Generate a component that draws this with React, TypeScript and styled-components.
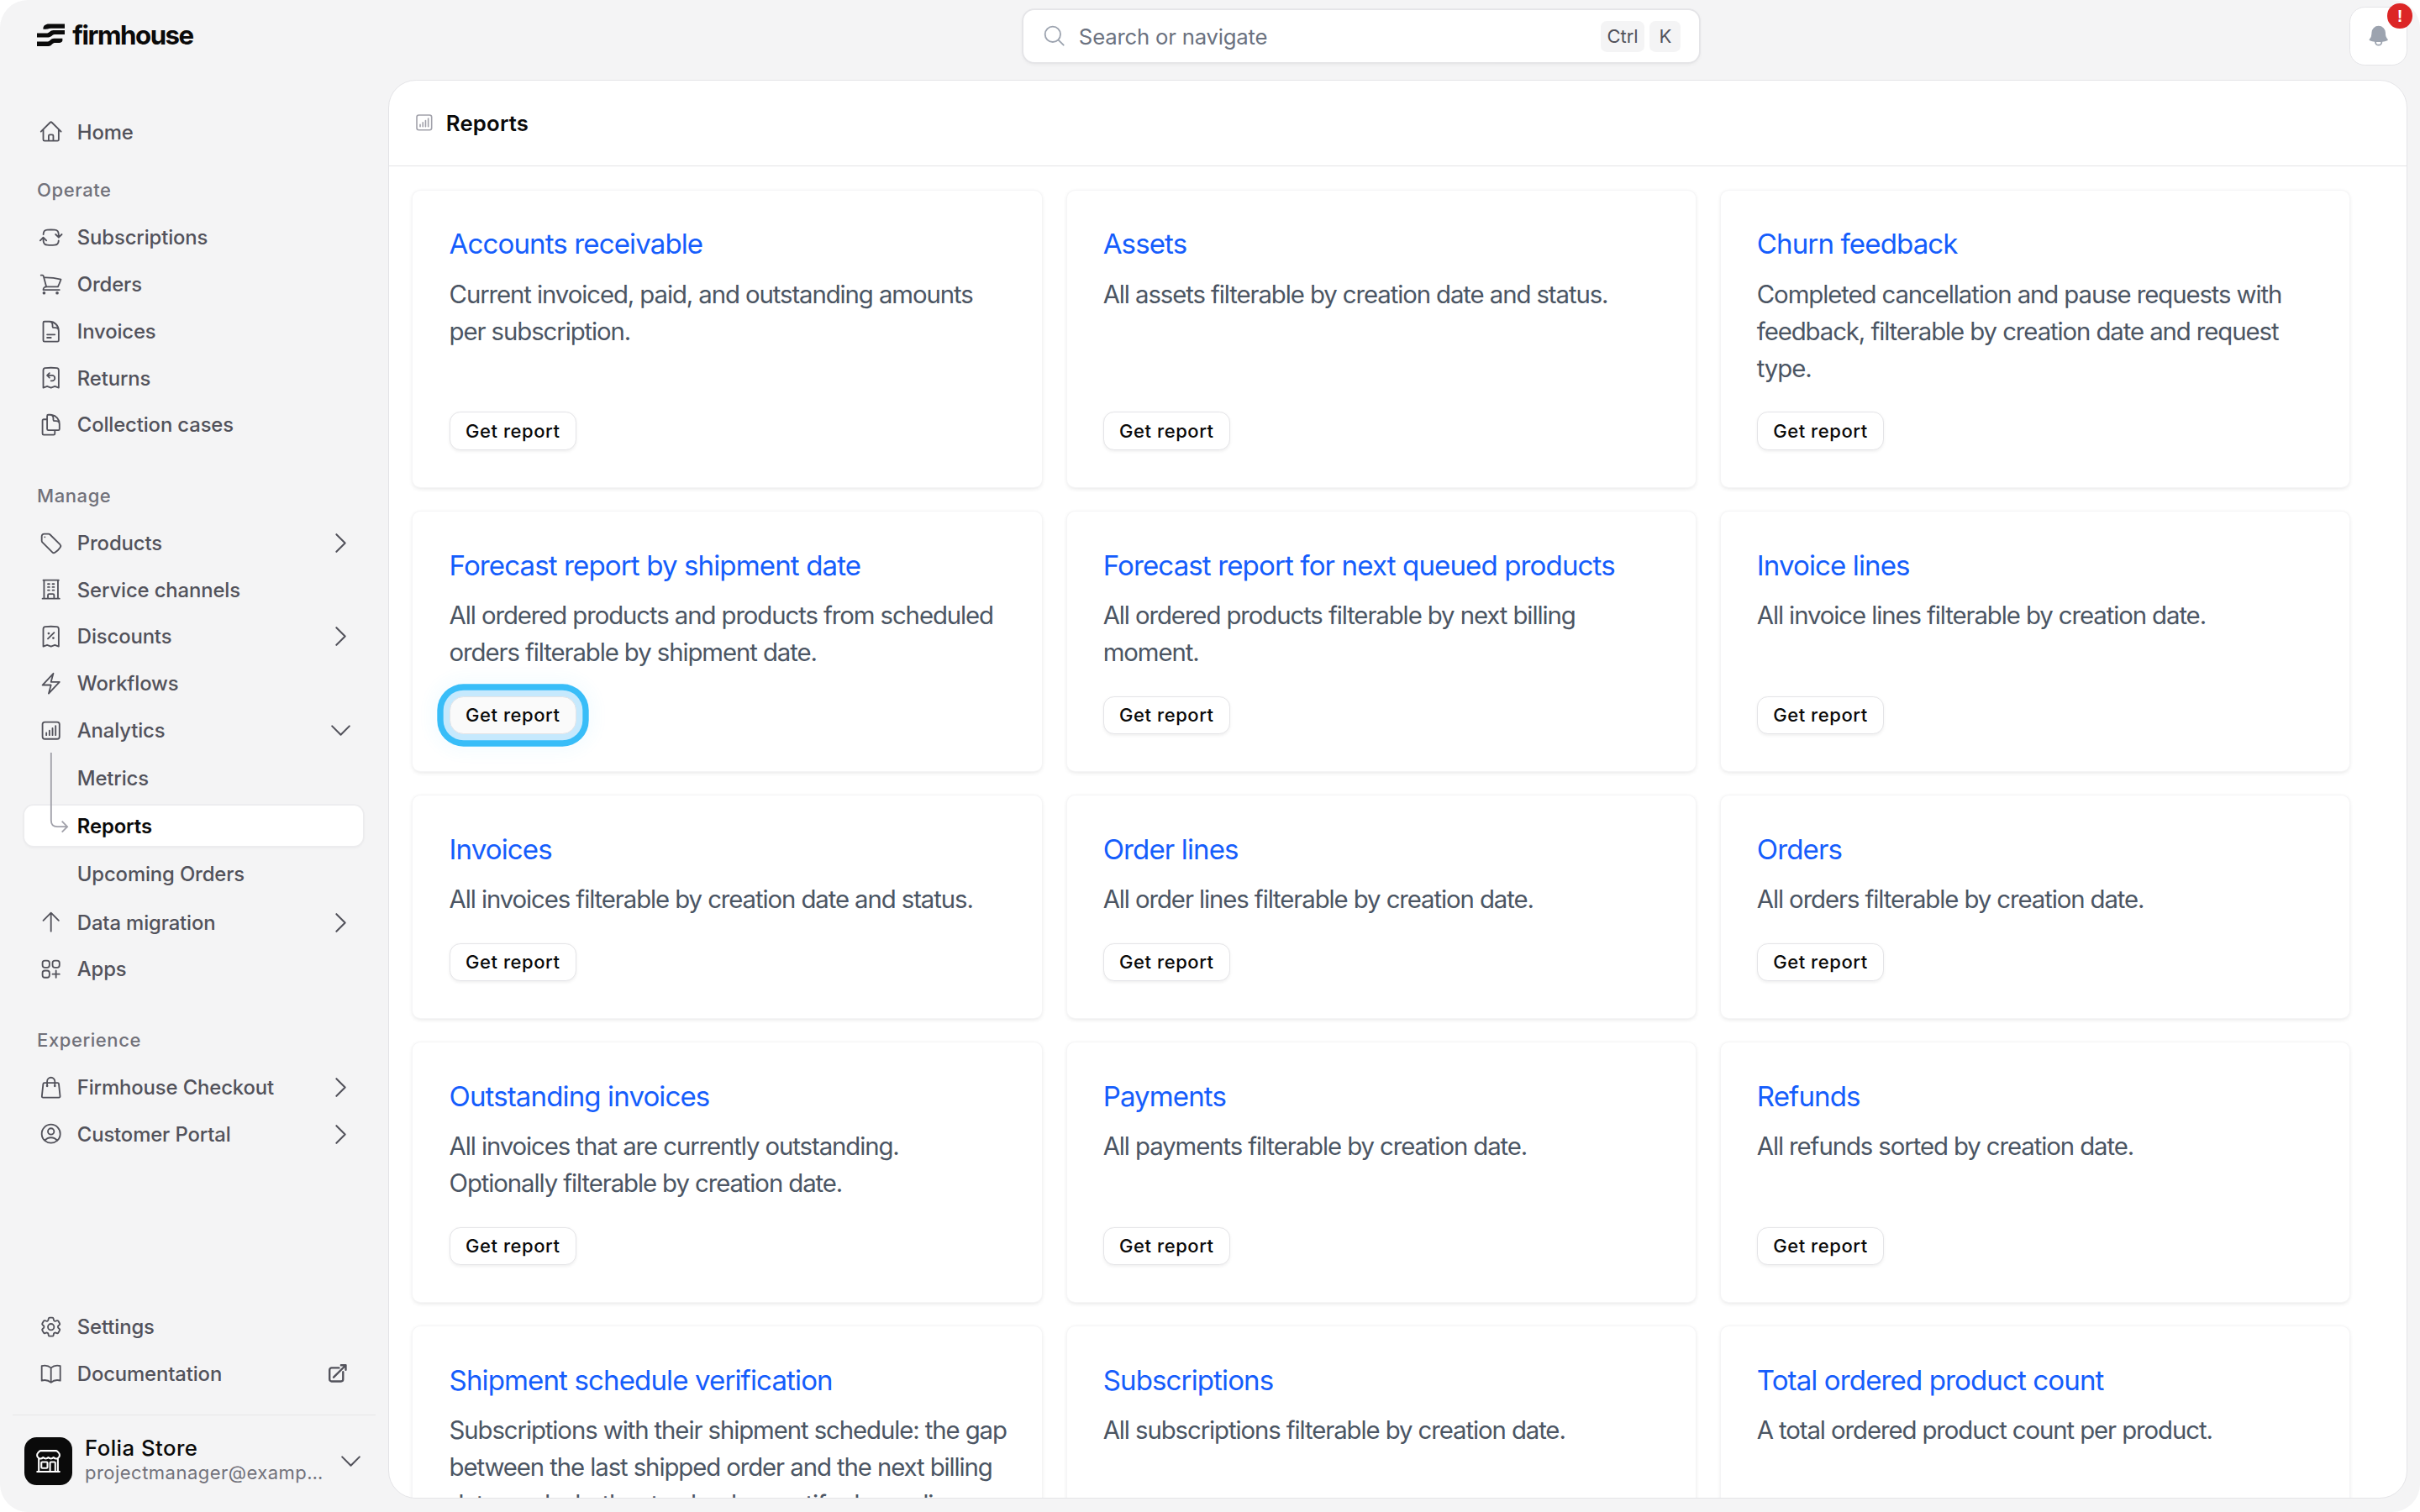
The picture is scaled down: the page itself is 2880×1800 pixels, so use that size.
import React from 'react';
import styled, { createGlobalStyle, css } from 'styled-components';
import {
  HiBell,
  HiOutlineArrowPathRoundedSquare,
  HiOutlineArrowTopRightOnSquare,
  HiOutlineArrowUp,
  HiOutlineBolt,
  HiOutlineBookOpen,
  HiOutlineBuildingOffice,
  HiOutlineBuildingStorefront,
  HiOutlineChartBarSquare,
  HiOutlineChevronDown,
  HiOutlineChevronRight,
  HiOutlineCog6Tooth,
  HiOutlineDocumentDuplicate,
  HiOutlineDocumentText,
  HiOutlineHome,
  HiOutlineMagnifyingGlass,
  HiOutlineReceiptPercent,
  HiOutlineReceiptRefund,
  HiOutlineShoppingBag,
  HiOutlineShoppingCart,
  HiOutlineSquaresPlus,
  HiOutlineTag,
  HiOutlineUserCircle,
} from 'react-icons/hi2';

const reports = [
  { title: 'Accounts receivable', text: 'Current invoiced, paid, and outstanding amounts per subscription.' },
  { title: 'Assets', text: 'All assets filterable by creation date and status.' },
  { title: 'Churn feedback', text: 'Completed cancellation and pause requests with feedback, filterable by creation date and request type.' },
  { title: 'Forecast report by shipment date', text: 'All ordered products and products from scheduled orders filterable by shipment date.', focused: true },
  { title: 'Forecast report for next queued products', text: 'All ordered products filterable by next billing moment.' },
  { title: 'Invoice lines', text: 'All invoice lines filterable by creation date.' },
  { title: 'Invoices', text: 'All invoices filterable by creation date and status.' },
  { title: 'Order lines', text: 'All order lines filterable by creation date.' },
  { title: 'Orders', text: 'All orders filterable by creation date.' },
  { title: 'Outstanding invoices', text: 'All invoices that are currently outstanding. Optionally filterable by creation date.' },
  { title: 'Payments', text: 'All payments filterable by creation date.' },
  { title: 'Refunds', text: 'All refunds sorted by creation date.' },
  { title: 'Shipment schedule verification', text: 'Subscriptions with their shipment schedule: the gap between the last shipped order and the next billing date, and whether to check or notify depending on the' },
  { title: 'Subscriptions', text: 'All subscriptions filterable by creation date.' },
  { title: 'Total ordered product count', text: 'A total ordered product count per product.' },
];

const GlobalStyle = createGlobalStyle`
  html, body {
    margin: 0;
    background: #fff;
  }
  * {
    box-sizing: border-box;
  }
`;

// the reference was taken from a 1568 wide window at a higher pixel ratio
const Shell = styled.div`
  zoom: 1.83673;
  width: 1568px;
  height: 980px;
  display: grid;
  grid-template-columns: 251.5px 1fr;
  overflow: hidden;
  border-radius: 18px;
  background: #f4f4f5;
  font-family: Inter, 'Liberation Sans', sans-serif;
`;

const Sidebar = styled.aside`
  display: flex;
  flex-direction: column;
  min-height: 0;
`;

const Brand = styled.div`
  display: flex;
  align-items: center;
  gap: 5px;
  height: 46px;
  padding-left: 24px;
`;

const BrandName = styled.span`
  font-size: 17px;
  font-weight: 700;
  letter-spacing: -0.8px;
  color: #0a0a0a;
`;

const Nav = styled.nav`
  display: flex;
  flex-direction: column;
  padding: 24.3px 16.5px 0 16px;
`;

const SectionLabel = styled.div`
  height: 16px;
  line-height: 16px;
  margin: 22.7px 0 7.3px 8px;
  font-size: 12px;
  font-weight: 500;
  letter-spacing: 0.3px;
  color: #71717a;

  &:first-of-type {
    margin-top: 14.7px;
  }
`;

const NavRow = styled.a`
  display: flex;
  align-items: center;
  height: 30.4px;
  padding: 0 5.5px 0 9px;
  font-size: 13px;
  font-weight: 500;
  letter-spacing: -0.07px;
  color: #52525b;

  svg {
    flex: none;
  }
`;

const NavIcon = styled.span`
  display: flex;
  width: 25px;
  color: #52525b;
`;

const NavTail = styled.span<{ $inset?: boolean }>`
  display: flex;
  margin-left: auto;
  margin-right: ${(p) => (p.$inset ? '4px' : '0')};
  color: #52525b;
`;

const SubList = styled.div`
  position: relative;
  display: flex;
  flex-direction: column;
  gap: 5px;
  padding: 2.5px 0 3px;
`;

const SubRow = styled.a<{ $active?: boolean }>`
  display: flex;
  align-items: center;
  height: 26.2px;
  padding-left: 34px;
  border-radius: 6px;
  font-size: 13px;
  font-weight: 500;
  letter-spacing: -0.07px;
  color: #52525b;

  ${(p) =>
    p.$active &&
    css`
      background: #fff;
      color: #0a0a0a;
      font-weight: 600;
      box-shadow: 0 0 0 1px #ececee, 0 1px 2px rgba(0, 0, 0, 0.06);
    `}
`;

const TreeLine = styled.svg`
  position: absolute;
  left: 16px;
  top: -1px;
  z-index: 1;
`;

const BottomNav = styled.div`
  display: flex;
  flex-direction: column;
  margin-top: auto;
  padding: 0 16px 11.5px;
`;

const Account = styled.div`
  display: flex;
  align-items: center;
  flex: none;
  height: 60px;
  margin: 0 8px 3px;
  padding: 0 7px 0 8px;
  border-top: 1px solid #e6e6e8;
`;

const Avatar = styled.div`
  display: flex;
  align-items: center;
  justify-content: center;
  flex: none;
  width: 31px;
  height: 31px;
  border-radius: 8px;
  background: #0a0a0a;
  color: #fff;
`;

const AccountText = styled.div`
  width: 155.5px;
  margin: -1.5px 0 0 8px;
`;

const AccountName = styled.div`
  font-size: 14px;
  line-height: 17px;
  font-weight: 500;
  letter-spacing: 0.25px;
  color: #0a0a0a;
`;

const AccountMail = styled.div`
  font-size: 12px;
  line-height: 16px;
  letter-spacing: 0.25px;
  color: #71717a;
  overflow: hidden;
  white-space: nowrap;
  text-overflow: ellipsis;
`;

const AccountChevron = styled(HiOutlineChevronDown)`
  margin-left: auto;
  color: #52525b;
`;

const Main = styled.main`
  display: flex;
  flex-direction: column;
  min-width: 0;
  min-height: 0;
  padding: 0 8px 8.5px 0;
`;

const TopBar = styled.header`
  display: flex;
  align-items: flex-start;
  flex: none;
  height: 51.5px;
  padding: 6.5px 0 0 411.5px;
`;

const Search = styled.div`
  display: flex;
  align-items: center;
  width: 438px;
  height: 34px;
  padding: 0 12px;
  border-radius: 7px;
  background: #fff;
  box-shadow: 0 0 0 1px #e4e4e7, 0 1px 3px rgba(0, 0, 0, 0.08);
  color: #9ca3af;
`;

const SearchText = styled.span`
  margin-left: 8px;
  font-size: 14px;
  letter-spacing: -0.11px;
  color: #6b7280;
`;

const Kbd = styled.kbd`
  display: flex;
  align-items: center;
  justify-content: center;
  height: 20px;
  min-width: 20px;
  margin-left: 3.5px;
  padding: 0 4px;
  border-radius: 4px;
  background: #f4f4f5;
  font-family: inherit;
  font-size: 12px;
  color: #52525b;

  &:first-of-type {
    margin-left: auto;
  }
`;

const BellButton = styled.button`
  position: relative;
  display: flex;
  align-items: center;
  justify-content: center;
  width: 38px;
  height: 38px;
  margin: -2.2px 0 0 auto;
  padding: 0;
  border: 1px solid #e4e4e7;
  border-radius: 10px;
  background: #fff;
  color: #9ca3af;
`;

const Badge = styled.span`
  position: absolute;
  top: -2.5px;
  right: -3.5px;
  display: flex;
  align-items: center;
  justify-content: center;
  width: 16px;
  height: 16px;
  border-radius: 50%;
  background: #dc2626;
  color: #fff;
  font-size: 11px;
  font-weight: 700;
`;

const Panel = styled.section`
  display: flex;
  flex-direction: column;
  flex: 1;
  min-height: 0;
  overflow: hidden;
  border: 1px solid #e4e4e7;
  border-radius: 18px;
  background: #fff;
`;

const PanelHeader = styled.div`
  display: flex;
  align-items: center;
  flex: none;
  height: 55.5px;
  padding-left: 16px;
  border-bottom: 1px solid #e4e4e7;
`;

const PanelTitle = styled.h1`
  margin: 0 0 0 7px;
  font-size: 14px;
  font-weight: 600;
  letter-spacing: 0.1px;
  color: #0a0a0a;
`;

const Grid = styled.div`
  display: grid;
  grid-template-columns: repeat(3, 1fr);
  gap: 16px;
  padding: 16px 37px 0 15.5px;
`;

const Card = styled.article`
  display: flex;
  flex-direction: column;
  padding: 21px 22px 24px 23.5px;
  border-radius: 5px;
  background: #fff;
  box-shadow: 0 0 0 0.5px #f5f5f6, 0 1px 3px rgba(0, 0, 0, 0.1);
`;

const CardTitle = styled.a`
  font-size: 18px;
  line-height: 28px;
  letter-spacing: -0.48px;
  color: #155dfc;
`;

const CardText = styled.p`
  margin: 6.5px 0 16px;
  font-size: 16px;
  line-height: 24px;
  letter-spacing: -0.6px;
  color: #4b5563;
`;

const ReportButton = styled.button<{ $focused?: boolean }>`
  align-self: flex-start;
  height: 24.6px;
  margin-top: auto;
  padding: 0 10px;
  border: 1px solid #e4e4e7;
  border-radius: 7px;
  background: #fff;
  font-family: inherit;
  font-size: 12px;
  font-weight: 500;
  letter-spacing: 0.3px;
  color: #0a0a0a;
  box-shadow: 0 1px 2px rgba(0, 0, 0, 0.06);

  ${(p) =>
    p.$focused &&
    css`
      background: #fafafa;
      border-radius: 9px;
      box-shadow: 0 0 0 4px #c6e9fd, 0 0 0 8px #38bdf8, 0 0 10px 12px rgba(56, 189, 248, 0.05);
    `}
`;

const BrandMark = () => (
  <svg width="18" height="15" viewBox="0 0 98 78" fill="#0a0a0a">
    <path d="M22 16C22 7 30 0 42 0H98V15H50C42 15 40 18 28 18H22Z" />
    <path d="M0 32H36C44 32 46 22 58 22H98V37H62C54 37 52 47 40 47H0Z" />
    <path d="M0 62H38C46 62 48 51 60 51H90V58C90 62 86 66 78 66H62C54 66 52 78 40 78H0Z" />
  </svg>
);

type Item = { label: string; icon: React.ReactNode; tail?: React.ReactNode; inset?: boolean };

const right = <HiOutlineChevronRight size={18} />;

const operate: Item[] = [
  { label: 'Subscriptions', icon: <HiOutlineArrowPathRoundedSquare size={16} /> },
  { label: 'Orders', icon: <HiOutlineShoppingCart size={16} /> },
  { label: 'Invoices', icon: <HiOutlineDocumentText size={16} /> },
  { label: 'Returns', icon: <HiOutlineReceiptRefund size={16} /> },
  { label: 'Collection cases', icon: <HiOutlineDocumentDuplicate size={16} /> },
];

const experience: Item[] = [
  { label: 'Firmhouse Checkout', icon: <HiOutlineShoppingBag size={16} />, tail: right },
  { label: 'Customer Portal', icon: <HiOutlineUserCircle size={16} />, tail: right },
];

const Row = ({ label, icon, tail, inset }: Item) => (
  <NavRow>
    <NavIcon>{icon}</NavIcon>
    {label}
    {tail && <NavTail $inset={inset}>{tail}</NavTail>}
  </NavRow>
);

export default function App() {
  return (
    <Shell>
      <GlobalStyle />
      <Sidebar>
        <Brand>
          <BrandMark />
          <BrandName>firmhouse</BrandName>
        </Brand>
        <Nav>
          <Row label="Home" icon={<HiOutlineHome size={16} />} />
          <SectionLabel>Operate</SectionLabel>
          {operate.map((item) => (
            <Row key={item.label} {...item} />
          ))}
          <SectionLabel>Manage</SectionLabel>
          <Row label="Products" icon={<HiOutlineTag size={16} />} tail={right} />
          <Row label="Service channels" icon={<HiOutlineBuildingOffice size={16} />} />
          <Row label="Discounts" icon={<HiOutlineReceiptPercent size={16} />} tail={right} />
          <Row label="Workflows" icon={<HiOutlineBolt size={16} />} />
          <Row
            label="Analytics"
            icon={<HiOutlineChartBarSquare size={16} />}
            tail={<HiOutlineChevronDown size={18} />}
          />
          <SubList>
            <TreeLine width="14" height="52" viewBox="0 0 14 52" fill="none" stroke="#a1a1aa" strokeWidth="1">
              <path d="M1 0V44C1 46.500 2.500 48 5 48H11.500M8 44.500L11.500 48L8 51.500" />
            </TreeLine>
            <SubRow>Metrics</SubRow>
            <SubRow $active>Reports</SubRow>
            <SubRow>Upcoming Orders</SubRow>
          </SubList>
          <Row label="Data migration" icon={<HiOutlineArrowUp size={16} />} tail={right} />
          <Row label="Apps" icon={<HiOutlineSquaresPlus size={16} />} />
          <SectionLabel>Experience</SectionLabel>
          {experience.map((item) => (
            <Row key={item.label} {...item} />
          ))}
        </Nav>
        <BottomNav>
          <Row label="Settings" icon={<HiOutlineCog6Tooth size={16} />} />
          <Row
            label="Documentation"
            icon={<HiOutlineBookOpen size={16} />}
            tail={<HiOutlineArrowTopRightOnSquare size={14} strokeWidth={2.2} />}
            inset
          />
        </BottomNav>
        <Account>
          <Avatar>
            <HiOutlineBuildingStorefront size={18} />
          </Avatar>
          <AccountText>
            <AccountName>Folia Store</AccountName>
            <AccountMail>projectmanager@example.com</AccountMail>
          </AccountText>
          <AccountChevron size={18} />
        </Account>
      </Sidebar>
      <Main>
        <TopBar>
          <Search>
            <HiOutlineMagnifyingGlass size={16} />
            <SearchText>Search or navigate</SearchText>
            <Kbd>Ctrl</Kbd>
            <Kbd>K</Kbd>
          </Search>
          <BellButton>
            <HiBell size={16} />
            <Badge>!</Badge>
          </BellButton>
        </TopBar>
        <Panel>
          <PanelHeader>
            <HiOutlineChartBarSquare size={14} color="#a1a1aa" />
            <PanelTitle>Reports</PanelTitle>
          </PanelHeader>
          <Grid>
            {reports.map((report) => (
              <Card key={report.title}>
                <CardTitle>{report.title}</CardTitle>
                <CardText>{report.text}</CardText>
                <ReportButton $focused={report.focused}>Get report</ReportButton>
              </Card>
            ))}
          </Grid>
        </Panel>
      </Main>
    </Shell>
  );
}
